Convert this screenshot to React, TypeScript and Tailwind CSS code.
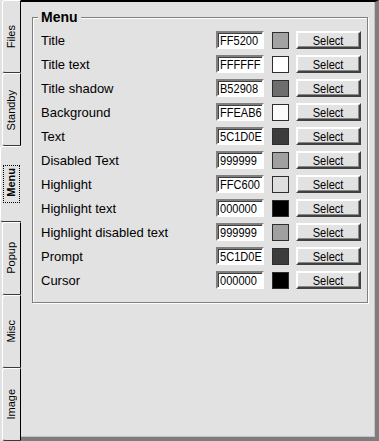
import React from "react";

const rows: { label: string; value: string; swatch: string }[] = [
  { label: "Title", value: "FF5200", swatch: "bg-[#a3a3a3]" },
  { label: "Title text", value: "FFFFFF", swatch: "bg-[#ffffff]" },
  { label: "Title shadow", value: "B52908", swatch: "bg-[#6e6e6e]" },
  { label: "Background", value: "FFEAB6", swatch: "bg-[#fbfbfb]" },
  { label: "Text", value: "5C1D0E", swatch: "bg-[#3c3c3c]" },
  { label: "Disabled Text", value: "999999", swatch: "bg-[#a0a0a0]" },
  { label: "Highlight", value: "FFC600", swatch: "bg-[#dedede]" },
  { label: "Highlight text", value: "000000", swatch: "bg-[#000000]" },
  { label: "Highlight disabled text", value: "999999", swatch: "bg-[#a0a0a0]" },
  { label: "Prompt", value: "5C1D0E", swatch: "bg-[#3c3c3c]" },
  { label: "Cursor", value: "000000", swatch: "bg-[#000000]" },
];

const tabs = ["Files", "Standby", "Menu", "Popup", "Misc", "Image"];

function Tab({ label, selected }: { label: string; selected: boolean }) {
  if (selected) {
    return (
      <div className="flex-1 flex items-center justify-center bg-[#e2e2e2] border-l border-l-white border-t border-t-white border-b border-b-[#3a3a3a] rounded-tl-[3px] rounded-bl-[3px]">
        <div className="border border-dotted border-black px-[1px] py-[2px] leading-none">
          <span className="[writing-mode:vertical-rl] rotate-180 inline-block font-bold text-[11px] text-black leading-[13px]">
            {label}
          </span>
        </div>
      </div>
    );
  }
  return (
    <div className="flex-1 flex">
      <div className="w-[2px] bg-[#e2e2e2]" />
      <div className="flex-1 flex items-center justify-center bg-[#e2e2e2] border-l border-l-white border-t border-t-white border-b border-b-[#3a3a3a] border-r border-r-black rounded-tl-[3px] rounded-bl-[3px]">
        <span className="[writing-mode:vertical-rl] rotate-180 inline-block text-[11px] text-black leading-[13px]">
          {label}
        </span>
      </div>
    </div>
  );
}

export default function App() {
  return (
    <div
      className="w-[379px] h-[441px] flex bg-[#e2e2e2] overflow-hidden"
      style={{ fontFamily: '"Liberation Sans", Arial, sans-serif' }}
    >
      <div className="w-[21px] h-full flex flex-col">
        {tabs.map((t) => (
          <Tab key={t} label={t} selected={t === "Menu"} />
        ))}
      </div>
      <div className="flex-1 h-full bg-[#e2e2e2] border-t-2 border-t-black border-r-4 border-r-[#7d7d7d] border-b-4 border-b-[#7d7d7d] shadow-[inset_-1px_-1px_0_#c4c4c4]">
        <fieldset className="ml-[11px] mt-[8px] w-[336px] border border-[#808080] shadow-[1px_1px_0_#ffffff,inset_1px_1px_0_#ffffff] pl-[8px] pr-[6px] pt-[4px] pb-[10px]">
          <legend className="ml-[-3px] px-[3px] bg-[#e2e2e2] text-[14px] leading-[14px] font-bold text-black">
            Menu
          </legend>
          <div className="flex flex-col">
            {rows.map((r, i) => (
              <div key={i} className="h-[24px] flex items-center">
                <div className="w-[175px] text-[13px] text-black leading-none">{r.label}</div>
                <div className="w-[48px] h-[18px] bg-white border-2 border-t-[#808080] border-l-[#808080] border-b-white border-r-white shadow-[inset_1px_1px_0_#404040] flex items-center pl-[2px] overflow-hidden">
                  <span className="inline-block origin-left scale-x-[0.85] text-[13px] text-black leading-none whitespace-nowrap">
                    {r.value}
                  </span>
                </div>
                <div className={`ml-[8px] w-[17px] h-[17px] border border-[#2e2e2e] ${r.swatch}`} />
                <button className="ml-[7px] w-[65px] h-[18px] bg-[#e2e2e2] border-2 border-t-white border-l-white border-b-[#404040] border-r-[#404040] shadow-[inset_-1px_-1px_0_#8a8a8a] flex items-center justify-center">
                  <span className="inline-block scale-x-[0.85] text-[13px] text-black leading-none">
                    Select
                  </span>
                </button>
              </div>
            ))}
          </div>
        </fieldset>
      </div>
    </div>
  );
}
